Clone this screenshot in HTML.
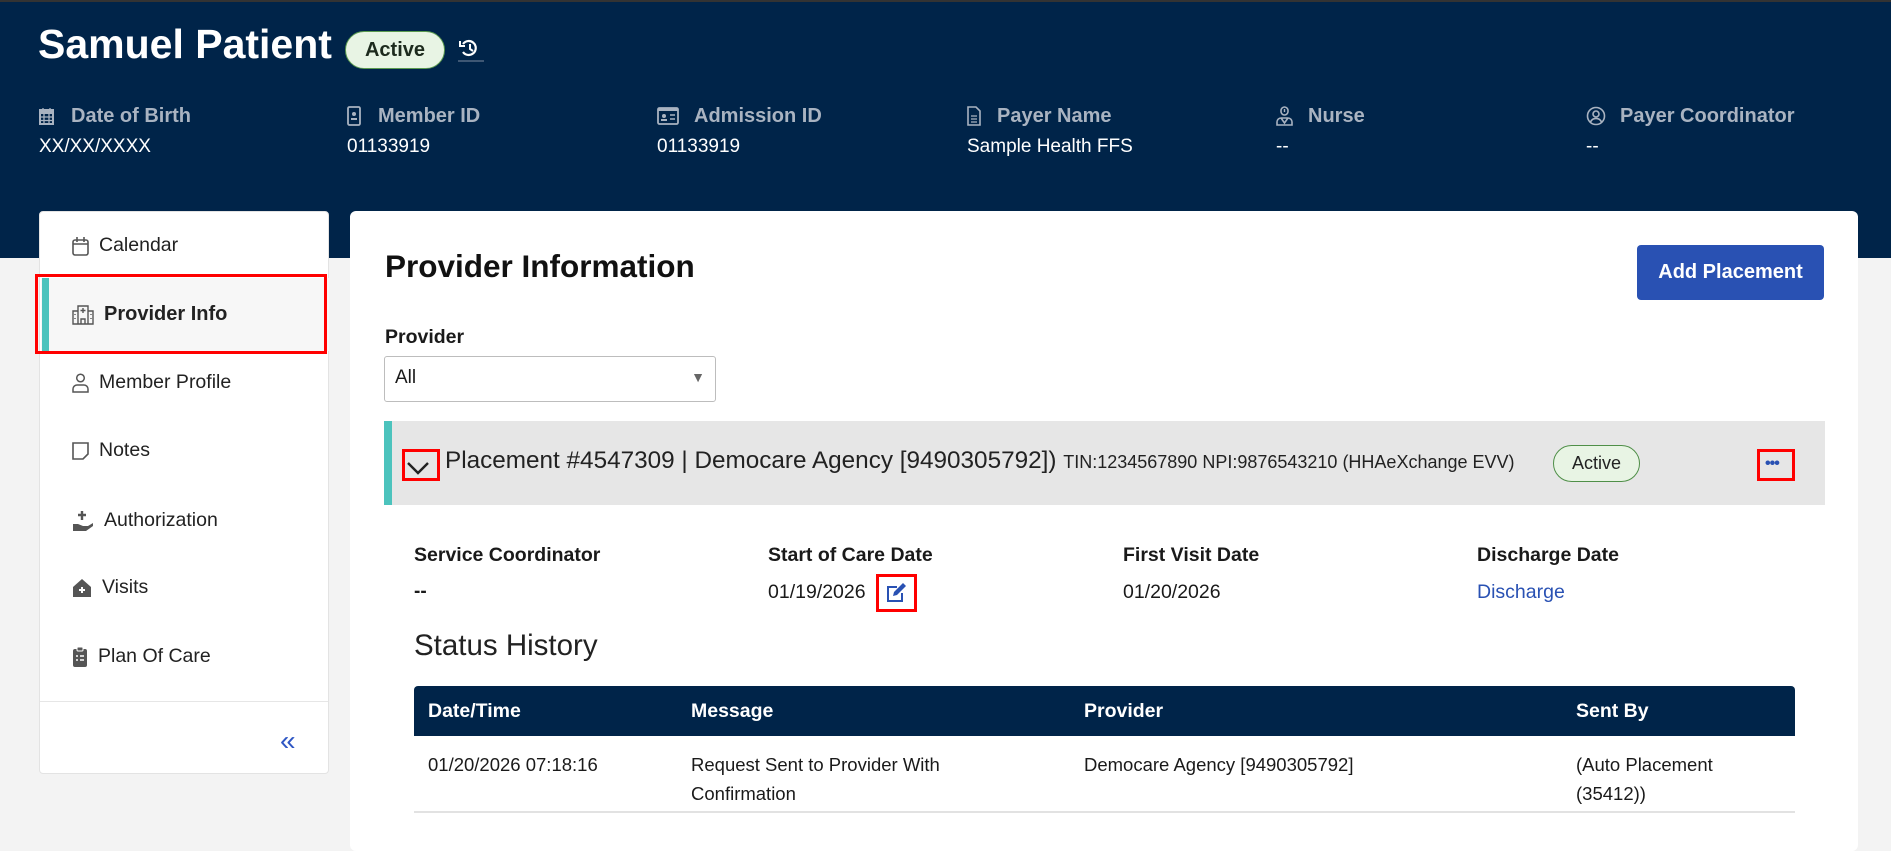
<!DOCTYPE html>
<html><head><meta charset="utf-8">
<style>
*{box-sizing:border-box;margin:0;padding:0}
body{width:1891px;height:826px;overflow:hidden;background:#f3f3f3;font-family:"Liberation Sans",sans-serif;color:#1a1a1a;position:relative}
.hdr{position:absolute;left:0;top:0;width:1891px;height:258px;background:#002449;border-top:2px solid #333}
.abs{position:absolute;white-space:nowrap}
.lbl{color:#a9b3c1;font-weight:bold;font-size:20px}
.val{color:#fff;font-size:19px}
.side{position:absolute;left:39px;top:211px;width:290px;height:563px;background:#fff;border:1px solid #e3e3e3;border-radius:4px}
.item{position:absolute;left:32px;font-size:19.5px;color:#222;display:flex;align-items:center;gap:10px}
.main{position:absolute;left:350px;top:211px;width:1508px;height:640px;background:#fff;border-radius:6px}
.pill{position:absolute;background:#e8f4e4;border:1.5px solid #3f8a3a;border-radius:20px;display:flex;align-items:center;justify-content:center}
.red{position:absolute;border:3px solid #f00}
.dl{font-size:19.5px;font-weight:bold}
</style></head><body>
<div class="hdr"></div>
<div class="abs" style="left:38px;top:21px;font-size:41px;font-weight:bold;color:#fff">Samuel Patient</div>
<div class="pill" style="left:345px;top:31px;width:100px;height:38px;font-size:20px;font-weight:bold;color:#1d2a1d;border-color:#5a9a4f">Active</div>
<svg class="abs" style="left:456px;top:36px" width="28" height="26" viewBox="0 0 28 26"><path d="M7 8a7 7 0 1 1 0 8" fill="none" stroke="#fff" stroke-width="2.2"/><path d="M4 5v5h5" fill="none" stroke="#fff" stroke-width="2"/><path d="M14 8v5l3 2" fill="none" stroke="#fff" stroke-width="2"/><line x1="2" y1="25" x2="28" y2="25" stroke="#7b8aa0" stroke-width="1"/></svg>

<svg class="abs" style="left:39px;top:107px" width="15" height="18" viewBox="0 0 15 18"><rect x="1" y="3" width="13" height="14" fill="none" stroke="#a9b3c1" stroke-width="2"/><rect x="1" y="3" width="13" height="4" fill="#a9b3c1"/><path d="M4 1v4M11 1v4M1 10h13M1 13.5h13M5 7v10M10 7v10" stroke="#a9b3c1" stroke-width="1.3"/></svg>
<div class="abs lbl" style="left:71px;top:105px">Date of Birth</div>
<div class="abs val" style="left:39px;top:136px">XX/XX/XXXX</div>

<svg class="abs" style="left:347px;top:106px" width="14" height="20" viewBox="0 0 14 20"><rect x="1" y="1" width="12" height="18" rx="1.5" fill="none" stroke="#a9b3c1" stroke-width="1.8"/><circle cx="7" cy="8" r="2" fill="#a9b3c1"/><rect x="4" y="12" width="6" height="2" fill="#a9b3c1"/></svg>
<div class="abs lbl" style="left:378px;top:105px">Member ID</div>
<div class="abs val" style="left:347px;top:136px">01133919</div>

<svg class="abs" style="left:657px;top:107px" width="22" height="18" viewBox="0 0 22 18"><rect x="1" y="1" width="20" height="16" rx="1.5" fill="none" stroke="#a9b3c1" stroke-width="1.8"/><rect x="1" y="1" width="20" height="3" fill="#a9b3c1"/><circle cx="7" cy="9" r="2" fill="#a9b3c1"/><rect x="4" y="12" width="6" height="2" fill="#a9b3c1"/><path d="M13 8h5M13 12h5" stroke="#a9b3c1" stroke-width="1.6"/></svg>
<div class="abs lbl" style="left:694px;top:105px">Admission ID</div>
<div class="abs val" style="left:657px;top:136px">01133919</div>

<svg class="abs" style="left:967px;top:106px" width="14" height="20" viewBox="0 0 14 20"><path d="M1 1h8l4 4v14H1z" fill="none" stroke="#a9b3c1" stroke-width="1.6"/><path d="M4 10h6M4 13h6M4 16h6" stroke="#a9b3c1" stroke-width="1.3"/></svg>
<div class="abs lbl" style="left:997px;top:105px">Payer Name</div>
<div class="abs val" style="left:967px;top:136px">Sample Health FFS</div>

<svg class="abs" style="left:1276px;top:106px" width="17" height="20" viewBox="0 0 17 20"><rect x="5" y="1" width="7" height="8" rx="3.5" fill="none" stroke="#a9b3c1" stroke-width="1.6"/><path d="M8.5 3v3" stroke="#a9b3c1" stroke-width="1.4"/><path d="M1 19v-3a4 4 0 0 1 4-4h7a4 4 0 0 1 4 4v3z M5 12l3.5 5 3.5-5" fill="none" stroke="#a9b3c1" stroke-width="1.6"/></svg>
<div class="abs lbl" style="left:1308px;top:105px">Nurse</div>
<div class="abs val" style="left:1276px;top:136px">--</div>

<svg class="abs" style="left:1586px;top:106px" width="20" height="20" viewBox="0 0 20 20"><circle cx="10" cy="10" r="8.5" fill="none" stroke="#a9b3c1" stroke-width="1.6"/><circle cx="10" cy="8" r="3" fill="none" stroke="#a9b3c1" stroke-width="1.6"/><path d="M4.5 16a6 6 0 0 1 11 0" fill="none" stroke="#a9b3c1" stroke-width="1.6"/></svg>
<div class="abs lbl" style="left:1620px;top:105px">Payer Coordinator</div>
<div class="abs val" style="left:1586px;top:136px">--</div>

<div class="side">
 <div class="item" style="top:22px"><svg width="17" height="20" viewBox="0 0 17 20"><rect x="1" y="4" width="15" height="15" rx="2" fill="none" stroke="#555" stroke-width="1.6"/><path d="M1 8h15M5 1v5M12 1v5" stroke="#555" stroke-width="1.6"/></svg>Calendar</div>
 <div style="position:absolute;left:1px;top:66px;width:288px;height:73px;background:#f7f7f7"></div>
 <div style="position:absolute;left:2px;top:66px;width:7px;height:73px;background:#4cc3bd"></div>
 <div class="item" style="top:91px;font-weight:bold;font-size:20px"><svg width="22" height="20" viewBox="0 0 22 20"><path d="M6 1h10v18H6zM1 6h5v13H1zM16 6h5v13h-5z" fill="none" stroke="#555" stroke-width="1.4"/><path d="M11 3v5M8.5 5.5h5M9 19v-5h4v5" fill="none" stroke="#555" stroke-width="1.4"/><path d="M3 9v1M3 13v1M19 9v1M19 13v1" stroke="#555" stroke-width="1.4"/></svg>Provider Info</div>
 <div class="item" style="top:159px"><svg width="17" height="20" viewBox="0 0 17 20"><circle cx="8.5" cy="5" r="3.8" fill="none" stroke="#555" stroke-width="1.5"/><path d="M1 19v-3a4 4 0 0 1 4-4h7a4 4 0 0 1 4 4v3z" fill="none" stroke="#555" stroke-width="1.5"/></svg>Member Profile</div>
 <div class="item" style="top:227px"><svg width="17" height="18" viewBox="0 0 17 18"><path d="M1 1h15v11l-5 5H1z" fill="none" stroke="#555" stroke-width="1.6"/></svg>Notes</div>
 <div class="item" style="top:297px"><svg width="22" height="22" viewBox="0 0 22 22"><path d="M10 1v9M6 5h8" stroke="#555" stroke-width="2.4"/><path d="M1 14h5l5 2h5l5-3v3l-7 5H1z" fill="#555"/></svg>Authorization</div>
 <div class="item" style="top:364px"><svg width="20" height="20" viewBox="0 0 20 20"><path d="M10 1l9 8v10H1V9z" fill="#555"/><path d="M10 9v6M7 12h6" stroke="#fff" stroke-width="2"/></svg>Visits</div>
 <div class="item" style="top:433px"><svg width="16" height="22" viewBox="0 0 16 22"><rect x="1" y="3" width="14" height="18" rx="2" fill="#555"/><rect x="5" y="1" width="6" height="4" rx="1" fill="#555" stroke="#fff" stroke-width="1"/><path d="M4 10h2M8 10h4M4 14h2M8 14h4" stroke="#fff" stroke-width="1.4"/></svg>Plan Of Care</div>
 <div style="position:absolute;left:0;top:489px;width:288px;height:1px;background:#e6e6e6"></div>
 <div class="abs" style="left:240px;top:513px;font-size:28px;color:#2f57c4">«</div>
</div>
<div class="red" style="left:35px;top:274px;width:292px;height:80px"></div>

<div class="main">
 <div class="abs" style="left:35px;top:37px;font-size:31.5px;font-weight:bold;color:#111">Provider Information</div>
 <div class="abs" style="left:1287px;top:34px;width:187px;height:55px;background:#2951b3;border-radius:4px;color:#fff;font-weight:bold;font-size:20px;display:flex;align-items:center;justify-content:center">Add Placement</div>
 <div class="abs" style="left:35px;top:115px;font-size:19.5px;font-weight:bold">Provider</div>
 <div class="abs" style="left:34px;top:145px;width:332px;height:46px;border:1px solid #bdbdbd;border-radius:3px;font-size:19px;padding:10px 10px">All<span style="position:absolute;right:10px;top:12px;font-size:14px;color:#666">▼</span></div>
 <div class="abs" style="left:34px;top:210px;width:1441px;height:84px;background:#e6e6e6"></div>
 <div class="abs" style="left:34px;top:210px;width:8px;height:84px;background:#4cc3bd"></div>
 <svg class="abs" style="left:56px;top:250px" width="24" height="14" viewBox="0 0 24 14"><path d="M2 2l10 10 10-10" fill="none" stroke="#222" stroke-width="2.4"/></svg>
 <div class="abs" style="left:95px;top:236px;font-size:24.3px;color:#222">Placement #4547309 | Democare Agency [9490305792]) <span style="font-size:18px">TIN:1234567890 NPI:9876543210 (HHAeXchange EVV)</span></div>
 <div class="pill" style="left:1203px;top:234px;width:87px;height:37px;font-size:18px;color:#222;border-color:#4f8f48">Active</div>
 <div class="abs" style="left:1415px;top:244px;font-size:16px;color:#2951b3;font-weight:bold;letter-spacing:-1px">•••</div>
 <div class="abs dl" style="left:64px;top:333px">Service Coordinator</div>
 <div class="abs dl" style="left:418px;top:333px">Start of Care Date</div>
 <div class="abs dl" style="left:773px;top:333px">First Visit Date</div>
 <div class="abs dl" style="left:1127px;top:333px">Discharge Date</div>
 <div class="abs" style="left:64px;top:370px;font-size:19px;font-weight:bold">--</div>
 <div class="abs" style="left:418px;top:370px;font-size:19.5px">01/19/2026</div>
 <svg class="abs" style="left:535px;top:370px" width="24" height="22" viewBox="0 0 24 22"><path d="M2 5h10v2H4v12h12v-7h2v9H2z" fill="#2951b3"/><path d="M8 15l1-4 9-9 3 3-9 9z" fill="#2951b3"/></svg>
 <div class="abs" style="left:773px;top:370px;font-size:19.5px">01/20/2026</div>
 <div class="abs" style="left:1127px;top:370px;font-size:19.5px;color:#2951b3">Discharge</div>
 <div class="abs" style="left:64px;top:418px;font-size:29.5px;color:#222">Status History</div>
 <div class="abs" style="left:64px;top:475px;width:1381px;height:50px;background:#002449;border-radius:4px 4px 0 0"></div>
 <div class="abs" style="left:78px;top:489px;font-size:19.5px;font-weight:bold;color:#fff">Date/Time</div>
 <div class="abs" style="left:341px;top:489px;font-size:19.5px;font-weight:bold;color:#fff">Message</div>
 <div class="abs" style="left:734px;top:489px;font-size:19.5px;font-weight:bold;color:#fff">Provider</div>
 <div class="abs" style="left:1226px;top:489px;font-size:19.5px;font-weight:bold;color:#fff">Sent By</div>
 <div class="abs" style="left:78px;top:539px;font-size:18.5px;line-height:29px">01/20/2026 07:18:16</div>
 <div class="abs" style="left:341px;top:539px;font-size:18.5px;line-height:29px;white-space:normal;width:300px">Request Sent to Provider With Confirmation</div>
 <div class="abs" style="left:734px;top:539px;font-size:18.5px;line-height:29px">Democare Agency [9490305792]</div>
 <div class="abs" style="left:1226px;top:539px;font-size:18.5px;line-height:29px;white-space:normal;width:200px">(Auto Placement (35412))</div>
 <div class="abs" style="left:64px;top:600px;width:1381px;height:2px;background:#e2e2e2"></div>
</div>
<div class="red" style="left:402px;top:449px;width:38px;height:32px"></div>
<div class="red" style="left:876px;top:574px;width:41px;height:38px"></div>
<div class="red" style="left:1757px;top:449px;width:38px;height:32px"></div>
</body></html>
